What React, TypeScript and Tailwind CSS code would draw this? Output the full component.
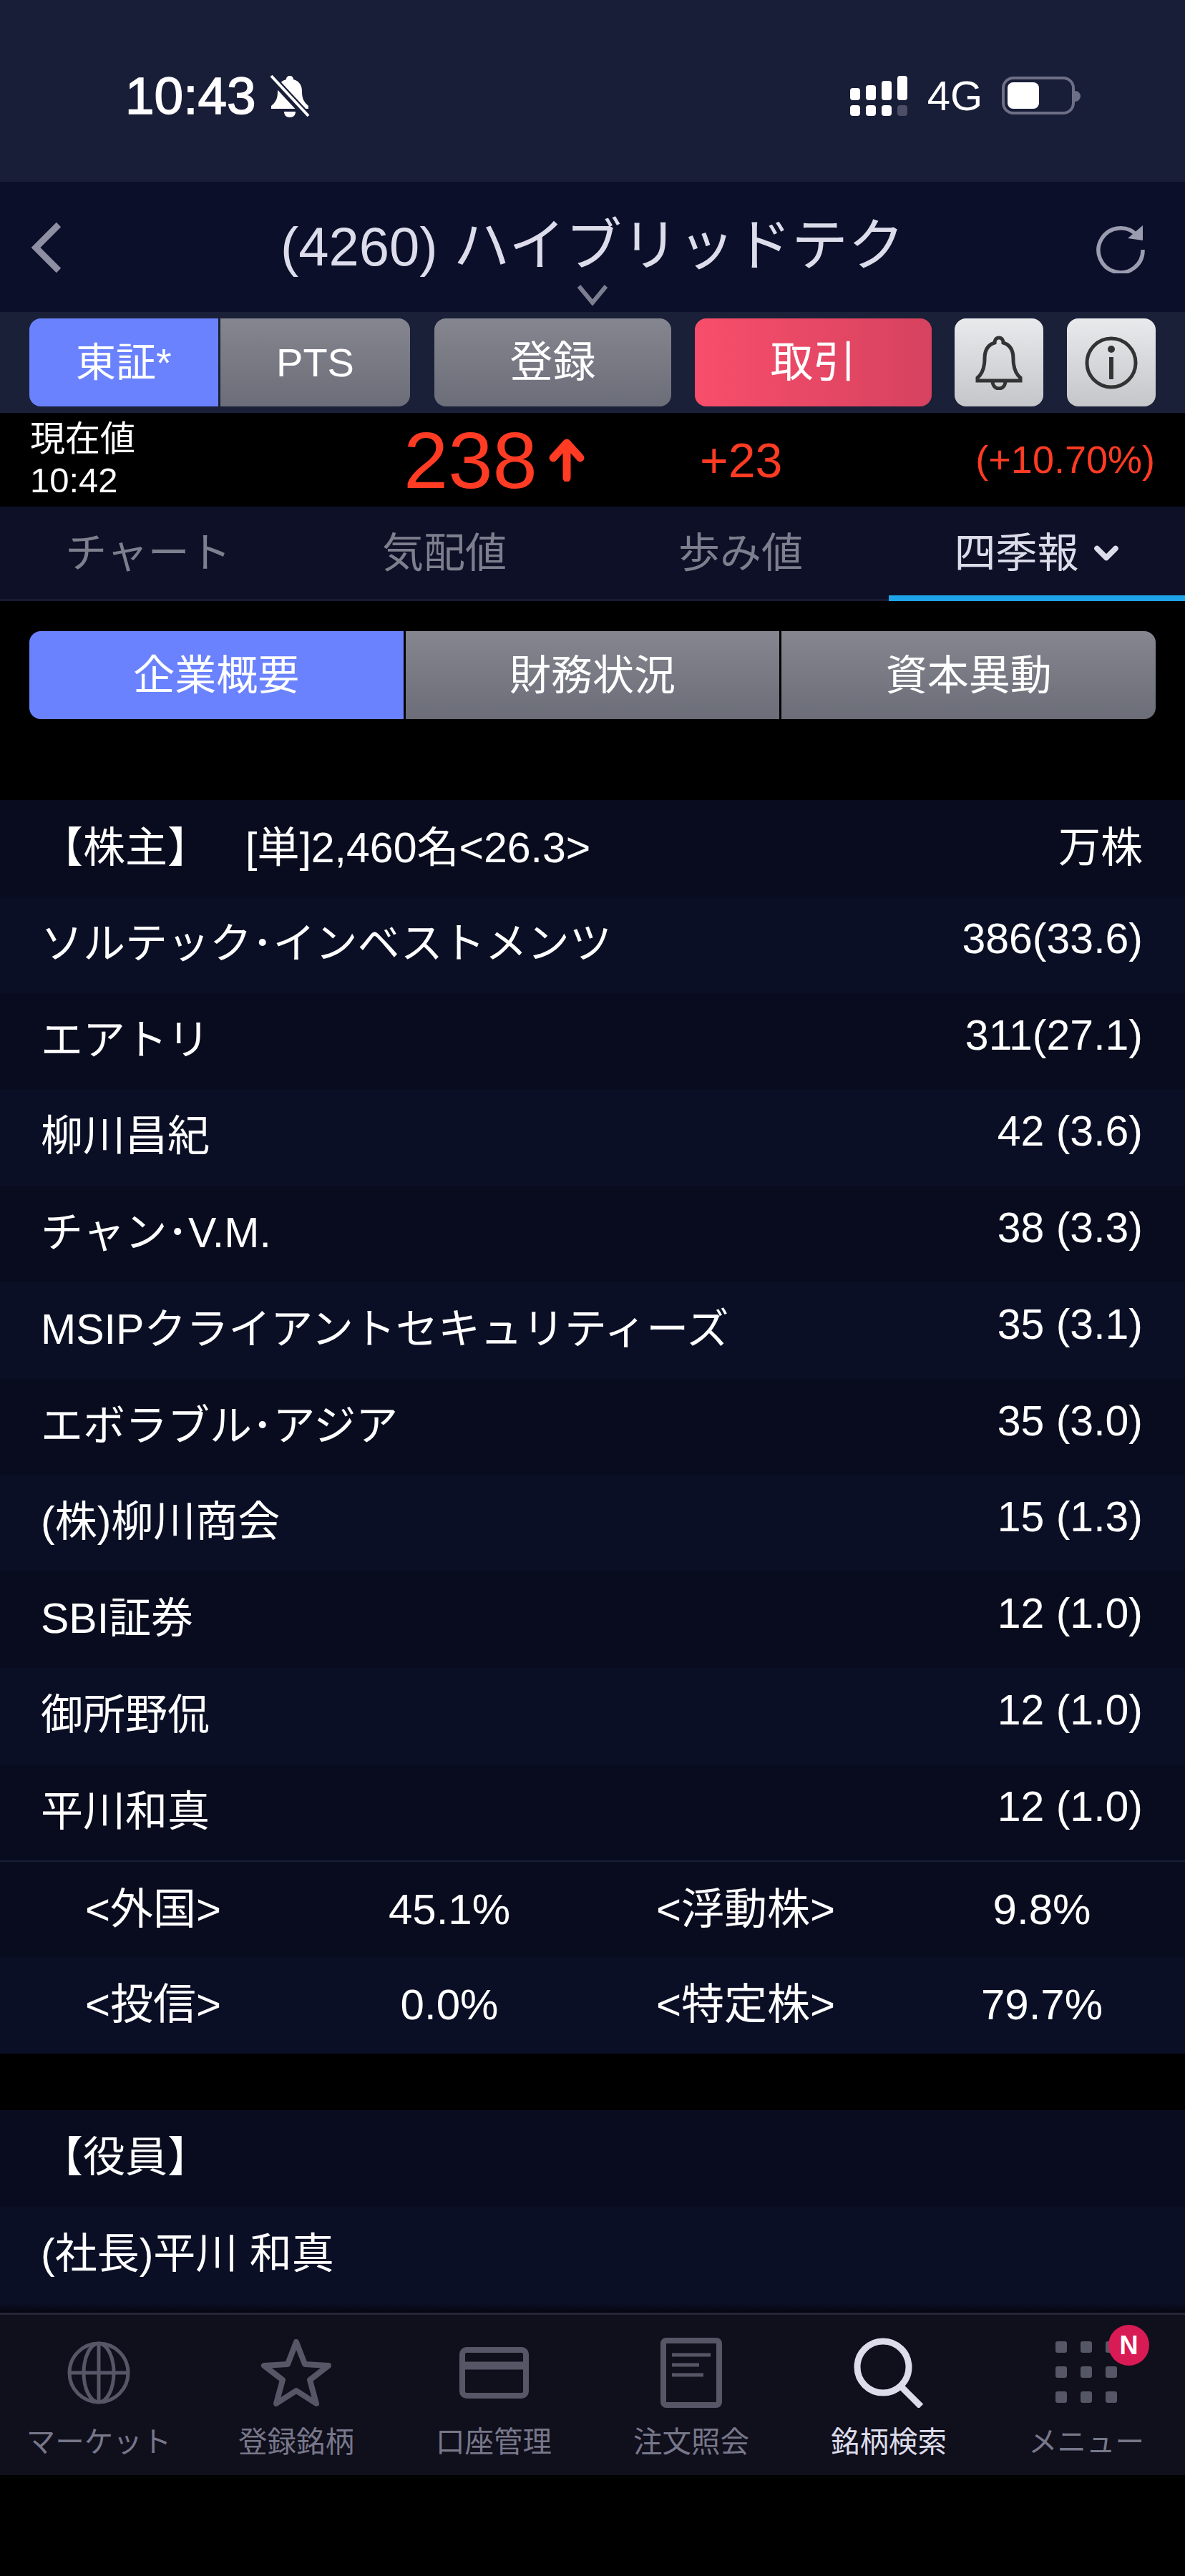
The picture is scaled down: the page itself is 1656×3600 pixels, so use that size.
import { ChevronDown } from 'lucide-react';

const FONT = "font-['Liberation_Sans','Noto_Sans_CJK_JP',sans-serif]";

const HOLDERS = [
  ['ソルテック･インベストメンツ', '386(33.6)'],
  ['エアトリ', '311(27.1)'],
  ['柳川昌紀', '42 (3.6)'],
  ['チャン･V.M.', '38 (3.3)'],
  ['MSIPクライアントセキュリティーズ', '35 (3.1)'],
  ['エボラブル･アジア', '35 (3.0)'],
  ['(株)柳川商会', '15 (1.3)'],
  ['SBI証券', '12 (1.0)'],
  ['御所野侃', '12 (1.0)'],
  ['平川和真', '12 (1.0)'],
];

function StatusBar() {
  return (
    <div className="h-[254px] bg-[#181d38] flex items-start justify-between pt-[98px] pl-[175px] pr-[146px]">
      <div className="flex items-center gap-[18px] text-white">
        <span className="text-[73px] leading-[72px] [-webkit-text-stroke:1.5px_white]">10:43</span>
        <svg width="58" height="62" viewBox="0 0 58 62" className="mt-[2px]">
          <path d="M29 2c3 0 5 2 5 5 8 2 12 8 12 17 0 10 3 15 9 20v4H3v-4c6-5 9-10 9-20 0-9 4-15 12-17 0-3 2-5 5-5z" fill="white" />
          <path d="M21 52h16c0 5-3 8-8 8s-8-3-8-8z" fill="white" />
          <path d="M3 4 55 60" stroke="#181d38" strokeWidth="11" />
          <path d="M3 2 55 58" stroke="white" strokeWidth="4" />
        </svg>
      </div>
      <div className="flex items-start">
        <svg width="80" height="58" viewBox="0 0 80 58" className="mt-[8px]">
          <rect x="0" y="17" width="14" height="17" rx="4" fill="white" />
          <rect x="22" y="13" width="14" height="21" rx="4" fill="white" />
          <rect x="44" y="7" width="14" height="27" rx="4" fill="white" />
          <rect x="66" y="0" width="14" height="34" rx="4" fill="white" />
          <rect x="0" y="41" width="14" height="15" rx="4" fill="white" />
          <rect x="22" y="41" width="14" height="15" rx="4" fill="white" />
          <rect x="44" y="41" width="14" height="15" rx="4" fill="white" />
          <rect x="66" y="41" width="14" height="15" rx="4" fill="#4c4f66" />
        </svg>
        <span className="ml-[28px] mt-[7px] text-[58px] leading-[58px] text-white">4G</span>
        <div className="ml-[27px] mt-[9px] w-[102px] h-[53px] rounded-[16px] border-[4px] border-[#6c6f85] p-[4px]">
          <div className="w-[44px] h-full rounded-[8px] bg-white" />
        </div>
        <div className="mt-[29px] w-[8px] h-[15px] rounded-r-full bg-[#6c6f85]" />
      </div>
    </div>
  );
}

function TitleBar() {
  return (
    <div className="relative h-[182px] bg-[#0b0f2a] flex items-center justify-center">
      <svg width="44" height="72" viewBox="0 0 44 72" className="absolute left-[43px] top-[56px]">
        <path d="M39 4 7 36 39 68" fill="none" stroke="#8e8fa3" strokeWidth="9" />
      </svg>
      <span className="text-[79px] leading-[90px] text-[#dcdcea] -mt-[2px]">
        <span className="text-[76px]">(4260)</span> ハイブリッドテク
      </span>
      <svg width="42" height="30" viewBox="0 0 42 30" className="absolute left-[807px] top-[143px]">
        <path d="M2 3 21 26 40 3" fill="none" stroke="#7d7f91" strokeWidth="6" />
      </svg>
      <svg width="70" height="70" viewBox="0 0 70 70" className="absolute left-[1531px] top-[58px]">
        <path d="M58 17A31 31 0 1 0 66 37" fill="none" stroke="#9c9cb0" strokeWidth="5.5" />
        <path d="M66 3 66 24 45 21z" fill="#9c9cb0" />
      </svg>
    </div>
  );
}

function ActionBar() {
  const gray = 'bg-gradient-to-b from-[#85868f] to-[#6b6d78]';
  const white = 'w-[124px] h-full rounded-[16px] bg-gradient-to-b from-[#e9eaec] to-[#c5c6c9] flex items-center justify-center';
  return (
    <div className="h-[141px] bg-[#1a2038] flex items-center pl-[41px]">
      <div className="flex h-[123px] w-[532px] gap-[3px] text-[56px] text-white">
        <div className="w-[264px] rounded-l-[16px] bg-[#6a82fd] flex items-center justify-center">東証*</div>
        <div className={`flex-1 rounded-r-[16px] ${gray} flex items-center justify-center`}>PTS</div>
      </div>
      <div className={`ml-[34px] h-[123px] w-[331px] rounded-[16px] ${gray} flex items-center justify-center text-[60px] text-white`}>登録</div>
      <div className="ml-[33px] h-[123px] w-[331px] rounded-[16px] bg-gradient-to-r from-[#f84e6b] to-[#d6425f] flex items-center justify-center text-[60px] text-white">取引</div>
      <div className="ml-[32px] h-[123px] flex gap-[33px]">
        <div className={white}>
          <svg width="68" height="76" viewBox="0 0 68 76">
            <path d="M34 3c4 0 6 3 6 7 10 3 14 11 14 22 0 12 3 21 10 27v4H4v-4c7-6 10-15 10-27 0-11 4-19 14-22 0-4 2-7 6-7z" fill="none" stroke="#333" strokeWidth="5" />
            <path d="M25 63c0 7 4 11 9 11s9-4 9-11" fill="none" stroke="#333" strokeWidth="5" />
          </svg>
        </div>
        <div className={white}>
          <svg width="76" height="76" viewBox="0 0 76 76">
            <circle cx="38" cy="38" r="34" fill="none" stroke="#333" strokeWidth="5" />
            <circle cx="38" cy="19" r="5" fill="#333" />
            <rect x="35" y="30" width="6" height="31" fill="#333" />
          </svg>
        </div>
      </div>
    </div>
  );
}

function PriceRow() {
  return (
    <div className="h-[131px] bg-black flex text-[#ff3b24]">
      <div className="w-[528px] pl-[42px] pt-[7px] text-[49px] leading-[58px] text-white">
        <div>現在値</div>
        <div>10:42</div>
      </div>
      <div className="w-[300px] flex items-center pl-[36px]">
        <span className="text-[112px] leading-[112px] mt-[2px]">238</span>
        <svg width="54" height="62" viewBox="0 0 54 62" className="ml-[14px] -mt-[2px]">
          <path d="M27 57V10M8 29 27 8 46 29" fill="none" stroke="#ff3b24" strokeWidth="11" strokeLinecap="round" strokeLinejoin="round" />
        </svg>
      </div>
      <div className="w-[150px] flex items-center ml-[150px] text-[68px] leading-[68px]">+23</div>
      <div className="flex-1 flex items-center justify-end pr-[42px] text-[54px]">(+10.70%)</div>
    </div>
  );
}

function Tabs() {
  return (
    <div className="h-[132px] bg-[#0d1026] grid grid-cols-4 text-[58px] text-[#7e7f8e] border-b-[3px] border-[#171a30]">
      <div className="flex items-center justify-center">チャート</div>
      <div className="flex items-center justify-center">気配値</div>
      <div className="flex items-center justify-center">歩み値</div>
      <div className="relative flex items-center justify-center gap-[12px] pl-[7px] text-[#dcdcea]">
        四季報
        <ChevronDown className="w-[52px] h-[52px]" strokeWidth={3.5} />
        <div className="absolute left-0 right-0 -bottom-[3px] h-[8px] bg-[#1ea5e8]" />
      </div>
    </div>
  );
}

function Segments() {
  const gray = 'bg-gradient-to-b from-[#85868f] to-[#6b6d78]';
  return (
    <div className="h-[278px] pt-[42px] px-[41px]">
      <div className="h-[123px] grid grid-cols-3 gap-[3px] text-[58px] text-white">
        <div className="rounded-l-[16px] bg-[#6a82fd] flex items-center justify-center">企業概要</div>
        <div className={`${gray} flex items-center justify-center`}>財務状況</div>
        <div className={`rounded-r-[16px] ${gray} flex items-center justify-center`}>資本異動</div>
      </div>
    </div>
  );
}

function Row({ left, right, odd }: { left: string; right?: string; odd: boolean }) {
  return (
    <div className={`h-[134.75px] flex items-center justify-between pl-[57px] pr-[59px] text-[59px] text-white ${odd ? 'bg-[#0b0f25]' : 'bg-[#090c1e]'}`}>
      <span className="pb-[2px]">{left}</span>
      {right && <span className="pb-[16px]">{right}</span>}
    </div>
  );
}

function StatRow({ cells, odd, line }: { cells: string[]; odd: boolean; line?: boolean }) {
  return (
    <div className={`h-[134.75px] grid grid-cols-[repeat(4,414px)] pl-[7px] text-[60px] text-white ${line ? 'border-t-[2px] border-[#1a1f3a]' : ''} ${odd ? 'bg-[#0b0f25]' : 'bg-[#090c1e]'}`}>
      {cells.map((c) => (
        <div key={c} className="flex items-center justify-center">{c}</div>
      ))}
    </div>
  );
}

function NavItem({ label, active, children }: { label: string; active?: boolean; children: React.ReactNode }) {
  return (
    <div className={`relative flex flex-col items-center text-[40.5px] leading-[48px] ${active ? 'text-[#dcdcea]' : 'text-[#77778a]'}`}>
      <div className="h-[100px] mt-[31px] flex items-center justify-center">{children}</div>
      <span className="mt-[23px]">{label}</span>
    </div>
  );
}

function BottomNav() {
  const c = '#565766';
  return (
    <div className="h-[227px] bg-[#100f1c] border-t-[3px] border-[#26263a] grid grid-cols-6">
      <NavItem label="マーケット">
        <svg width="88" height="88" viewBox="0 0 88 88" fill="none" stroke={c} strokeWidth="5">
          <circle cx="44" cy="44" r="41" />
          <ellipse cx="44" cy="44" rx="21" ry="41" />
          <path d="M44 3v82M3 44h82" />
        </svg>
      </NavItem>
      <NavItem label="登録銘柄">
        <svg width="100" height="96" viewBox="0 0 100 96" fill="none" stroke={c} strokeWidth="8" strokeLinejoin="round">
          <path d="M50 5 62 36 95 38 69 58 78 91 50 73 22 91 31 58 5 38 38 36z" />
        </svg>
      </NavItem>
      <NavItem label="口座管理">
        <svg width="97" height="72" viewBox="0 0 97 72" fill="none" stroke={c} strokeWidth="8">
          <rect x="4" y="4" width="89" height="64" rx="6" />
          <path d="M4 26h89" strokeWidth="11" />
        </svg>
      </NavItem>
      <NavItem label="注文照会">
        <svg width="86" height="98" viewBox="0 0 86 98" fill="none" stroke={c} strokeWidth="8">
          <rect x="4" y="4" width="78" height="90" rx="4" />
          <path d="M16 24h54M16 38h38M16 52h44" strokeWidth="5" />
        </svg>
      </NavItem>
      <NavItem label="銘柄検索" active>
        <svg width="98" height="98" viewBox="0 0 98 98" fill="none" stroke="#dcdcea" strokeWidth="9">
          <circle cx="41" cy="41" r="36" />
          <path d="M66 68 94 96" strokeWidth="9" />
        </svg>
      </NavItem>
      <NavItem label="メニュー">
        <svg width="86" height="88" viewBox="0 0 86 88" fill={c}>
          {[0, 35, 70].map((y) =>
            [0, 35, 70].map((x) => <rect key={`${x}-${y}`} x={x} y={y} width="16" height="16" rx="3" />)
          )}
        </svg>
        <div className="absolute left-[169px] top-[14px] w-[57px] h-[57px] rounded-full bg-[#d81b54] flex items-center justify-center text-[36px] font-bold text-white">N</div>
      </NavItem>
    </div>
  );
}

export default function App() {
  return (
    <div className={`w-[1656px] h-[3600px] bg-black overflow-hidden ${FONT}`}>
      <StatusBar />
      <TitleBar />
      <ActionBar />
      <PriceRow />
      <Tabs />
      <Segments />

      {/* 株主 */}
      <div className="h-[134.75px] bg-[#090c1e] flex items-center justify-between pl-[57px] pr-[59px] text-[59px] text-white">
        <div className="flex">
          <span>【株主】</span>
          <span className="ml-[50px]">[単]2,460名&lt;26.3&gt;</span>
        </div>
        <span>万株</span>
      </div>
      {HOLDERS.map(([name, val], i) => (
        <Row key={name} left={name} right={val} odd={i % 2 === 0} />
      ))}
      <StatRow cells={['<外国>', '45.1%', '<浮動株>', '9.8%']} odd={false} line />
      <StatRow cells={['<投信>', '0.0%', '<特定株>', '79.7%']} odd />

      <div className="h-[79px]" />
      <Row left="【役員】" odd={false} />
      <Row left="(社長)平川 和真" odd />
      <div className="h-[14px] bg-gradient-to-b from-[#0b0f25] to-[#05060f]" />
      <BottomNav />
    </div>
  );
}
